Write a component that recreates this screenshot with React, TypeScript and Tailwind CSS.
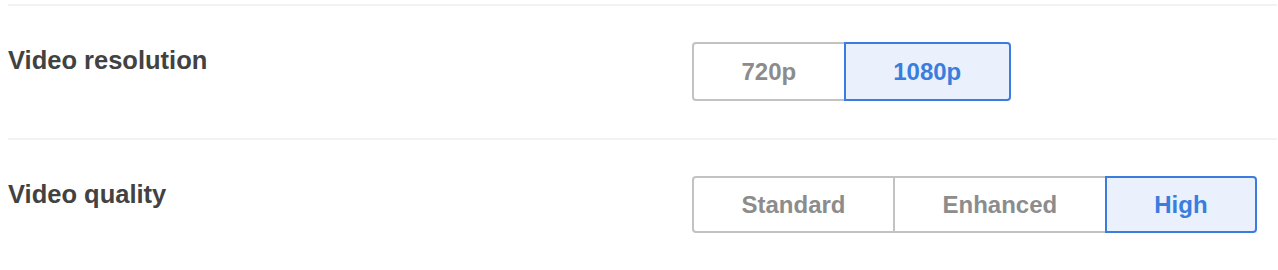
import React, { useState } from 'react'

interface SegmentedProps {
  options: string[]
  value: string
  onChange: (v: string) => void
  height: string
}

const Segmented: React.FC<SegmentedProps> = ({ options, value, onChange, height }) => {
  return (
    <div className="flex">
      {options.map((opt, i) => {
        const active = opt === value
        return (
          <button
            key={opt}
            onClick={() => onChange(opt)}
            className={[
              'relative border-2 px-[47.5px] text-[24px] font-bold leading-none',
              height,
              i > 0 ? '-ml-[2px]' : '',
              i === 0 ? 'rounded-l-[4px]' : '',
              i === options.length - 1 ? 'rounded-r-[4px]' : '',
              active
                ? 'z-10 border-[#3b7ddd] bg-[#eaf1fc] text-[#3b7ddd]'
                : 'border-[#c2c2c2] bg-white text-[#8c8c8c]'
            ].join(' ')}
          >
            {opt}
          </button>
        )
      })}
    </div>
  )
}

export default function App() {
  const [resolution, setResolution] = useState('1080p')
  const [quality, setQuality] = useState('High')

  return (
    <div className="h-[270px] w-full bg-white pl-[8px] pr-[1px] pt-[4px] font-['Liberation_Sans',Arial,sans-serif]">
      <div className="h-[2px] bg-[#f2f2f2]" />
      <div className="flex items-start pt-[36px] pb-[37px]">
        <h3 className="-mt-[1px] w-[684px] text-[25.5px] font-bold text-[#424242]">Video resolution</h3>
        <Segmented options={['720p', '1080p']} value={resolution} onChange={setResolution} height="h-[59px]" />
      </div>
      <div className="h-[2px] bg-[#f2f2f2]" />
      <div className="flex items-start pt-[36px]">
        <h3 className="-mt-[1px] w-[684px] text-[25.5px] font-bold text-[#424242]">Video quality</h3>
        <Segmented
          options={['Standard', 'Enhanced', 'High']}
          value={quality}
          onChange={setQuality}
          height="h-[57px]"
        />
      </div>
    </div>
  )
}
